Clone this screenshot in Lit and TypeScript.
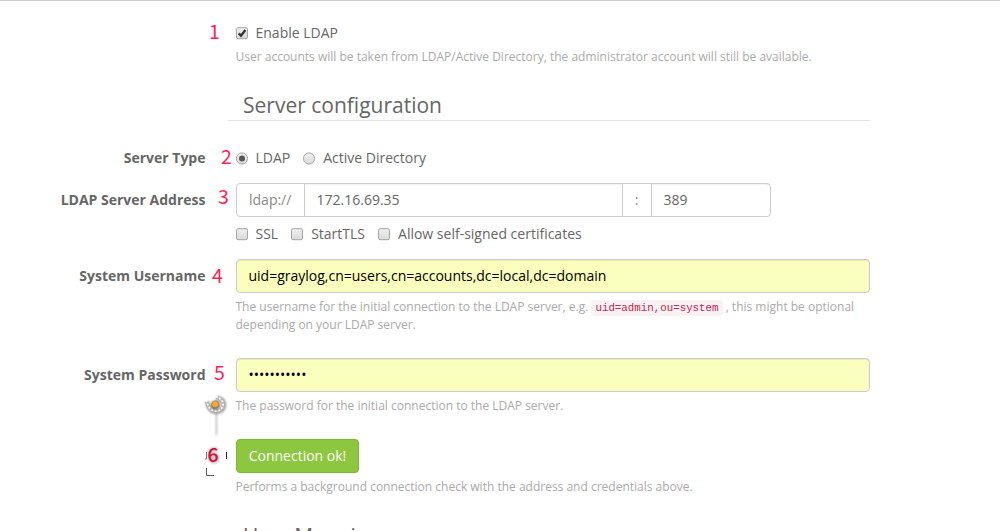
import { LitElement, html, css, svg } from "lit";
import { customElement, property } from "lit/decorators.js";

@customElement("check-mark")
class CheckMark extends LitElement {
  @property() kind = "checkbox";
  @property({ type: Boolean }) on = false;

  static styles = css`
    :host { display: block; flex: none; width: 13px; height: 13px; }
    svg { display: block; }
  `;

  render() {
    return html`<svg width="13" height="13" viewBox="0 0 13 13">
      <defs>
        <linearGradient id="g" x1="0" y1="0" x2="0" y2="1">
          <stop offset="0" stop-color="#efefef" />
          <stop offset="1" stop-color="#dadada" />
        </linearGradient>
      </defs>
      ${this.kind === "radio"
        ? svg`<circle cx="6" cy="6.5" r="5.6" fill="url(#g)" stroke="#a6a6a6" />
            ${this.on ? svg`<circle cx="6" cy="6.5" r="3" fill="#555" />` : ""}`
        : svg`<rect x="0.5" y="0.7" width="11" height="11" rx="1.6" fill="url(#g)" stroke="#a4a4a4" />
            ${this.on ? svg`<path d="M2.800 6.400 5 8.800 9.400 3" fill="none" stroke="#333" stroke-width="2.300" />` : ""}`}
    </svg>`;
  }
}

@customElement("app-root")
class AppRoot extends LitElement {
  static styles = css`
    :host {
      display: block; box-sizing: border-box; height: 531px; overflow: hidden;
      border-top: 1px solid #ccc; background: #fff; color: #666;
      font: 14px/20px "Open Sans", "Noto Sans", sans-serif;
    }
    .row { display: grid; grid-template-columns: 205.5px 634px; column-gap: 30.5px; position: relative; }
    .enable { padding-top: 22px; height: 63px; }
    .type { padding-top: 27px; height: 35px; }
    .address { height: 76px; }
    .username { height: 99px; }
    .password { height: 81px; }
    .test { height: 77px; }
    .label { font-weight: 700; text-align: right; }
    .address .label, .username .label, .password .label { padding-top: 7px; }
    .opts { display: flex; align-items: center; height: 20px; }
    .opt { display: flex; align-items: center; gap: 6.5px; margin-right: 12.5px; }
    .opt + .opt { gap: 7.5px; }
    .help { font-size: 12px; line-height: 18px; color: #aaa; margin-left: -0.5px; }
    .enable .help { margin-top: 5px; }
    .username .help, .password .help, .test .help { margin-top: 5px; }
    h3 {
      box-sizing: border-box; margin: 0 0 0 228px; width: 642px; height: 35px;
      padding: 4px 0 0 15px; border-bottom: 1px solid #e3e3e3;
      font-size: 21px; line-height: 30.5px; font-weight: 400;
    }
    h3.next { padding-top: 5px; }
    .group { display: flex; width: 535px; box-sizing: border-box; height: 34px; border: 1px solid #ccc; border-radius: 4px; line-height: 32px; }
    .group > div + div { border-left: 1px solid #ccc; }
    .scheme { width: 67px; padding-left: 12px; box-sizing: border-box; color: #888; }
    .host { width: 318px; padding-left: 11.5px; box-sizing: border-box; box-shadow: inset 0 1px 1px #0000000f; }
    .colon { width: 29px; box-sizing: border-box; padding-right: 1px; text-align: center; color: #888; }
    .port { flex: 1; padding-left: 11.5px; box-shadow: inset 0 1px 1px #0000000f; }
    .address .opts { margin-top: 7px; }
    .field {
      box-sizing: border-box; height: 34px; padding-left: 11.5px; line-height: 32px;
      border: 1px solid #ccc; border-radius: 4px; background: #faffbd; color: #000;
      box-shadow: inset 0 1px 1px #00000013;
    }
    code {
      padding: 2px 4px; border-radius: 4px; background: #f9f2f4; color: #c7254e;
      font: 10.8px "Liberation Mono", monospace;
    }
    .btn {
      box-sizing: border-box; width: 123px; height: 34px; border: 1px solid #7eb534; border-radius: 4px;
      background: #8dc63f; color: #fff; text-align: center; line-height: 32px;
    }
    .note { position: absolute; color: #ff1f55; font: 19.5px/24px "Noto Sans CJK SC", sans-serif; }
    .n1 { left: 209px; top: 18px; }
    .n2 { left: 221px; top: 23px; }
    .n3 { left: 218px; top: 1px; }
    .n4 { left: 212px; top: 4px; }
    .n5 { left: 214px; top: 2px; }
    .n6 { left: 207.5px; top: 3px; color: #d80f38; font-weight: 500; text-shadow: 0 0 3px #999, 1px 1px 3px #bbb; }
    .pin { position: absolute; left: 199.5px; top: 32px; }
    .marks { position: absolute; left: 200px; top: 8px; }
  `;

  render() {
    return html`
      <div class="row enable">
        <div></div>
        <div>
          <div class="opts"><div class="opt"><check-mark on></check-mark>Enable LDAP</div></div>
          <div class="help">User accounts will be taken from LDAP/Active Directory, the administrator account will still be available.</div>
        </div>
        <span class="note n1">1</span>
      </div>
      <h3>Server configuration</h3>
      <div class="row type">
        <div class="label">Server Type</div>
        <div class="opts">
          <div class="opt"><check-mark kind="radio" on></check-mark>LDAP</div>
          <div class="opt"><check-mark kind="radio"></check-mark>Active Directory</div>
        </div>
        <span class="note n2">2</span>
      </div>
      <div class="row address">
        <div class="label">LDAP Server Address</div>
        <div>
          <div class="group">
            <div class="scheme">ldap://</div><div class="host">172.16.69.35</div>
            <div class="colon">:</div><div class="port">389</div>
          </div>
          <div class="opts">
            <div class="opt"><check-mark></check-mark>SSL</div>
            <div class="opt"><check-mark></check-mark>StartTLS</div>
            <div class="opt"><check-mark></check-mark>Allow self-signed certificates</div>
          </div>
        </div>
        <span class="note n3">3</span>
      </div>
      <div class="row username">
        <div class="label">System Username</div>
        <div>
          <div class="field">uid=graylog,cn=users,cn=accounts,dc=local,dc=domain</div>
          <div class="help">The username for the initial connection to the LDAP server, e.g. <code>uid=admin,ou=system</code> , this might be optional<br />depending on your LDAP server.</div>
        </div>
        <span class="note n4">4</span>
      </div>
      <div class="row password">
        <div class="label">System Password</div>
        <div>
          <div class="field">•••••••••••</div>
          <div class="help">The password for the initial connection to the LDAP server.</div>
        </div>
        <span class="note n5">5</span>
        <svg class="pin" width="32" height="50" viewBox="0 0 32 50">
          <defs><filter id="soft" x="-50%" y="-50%" width="200%" height="200%"><feGaussianBlur stdDeviation="1.1" /></filter></defs>
          <path d="M15.500 24H17.500V46H15.500Z" fill="#ccc" opacity=".7" filter="url(#soft)" />
          <path d="M16.500 24V44" stroke="#dcdcdc" stroke-width="2" />
          <path d="M7 11.500C8 17 11 22 16 22C21 22 24 19 24 15.500C24 10 21 8.500 17 8" fill="none" stroke="#555" stroke-width="4.500" opacity=".55" filter="url(#soft)" />
          <path d="M6.500 11.500C8 17 11 21 16 21C20 21 23 18.500 23 14.500C23 10.500 20.500 8.500 16 7" fill="none" stroke="#b8b8b8" stroke-width="3" />
          <path d="M6.500 11C8 17 11 21 16 21C20 21 23 18.500 23 14.500C23 10.500 20.500 8.500 16 6.500" fill="none" stroke="#fff" stroke-width="1.900" stroke-linecap="round" stroke-dasharray="0.300 3.300" />
          <circle cx="15.500" cy="15" r="4.300" fill="#222" opacity=".75" filter="url(#soft)" />
          <circle cx="15.300" cy="14.200" r="3.300" fill="#ffa62c" stroke="#a87a35" stroke-width=".5" />
        </svg>
      </div>
      <div class="row test">
        <div></div>
        <div>
          <div class="btn">Connection ok!</div>
          <div class="help">Performs a background connection check with the address and credentials above.</div>
        </div>
        <svg class="marks" width="32" height="34" viewBox="0 0 32 34">
          <path d="M6.500 5V12H5" fill="none" stroke="#777" />
          <path d="M26.500 5V12" stroke="#222" />
          <path d="M6.500 21V28.500H14" fill="none" stroke="#555" />
        </svg>
        <span class="note n6">6</span>
      </div>
      <h3 class="next">User Mapping</h3>
    `;
  }
}
